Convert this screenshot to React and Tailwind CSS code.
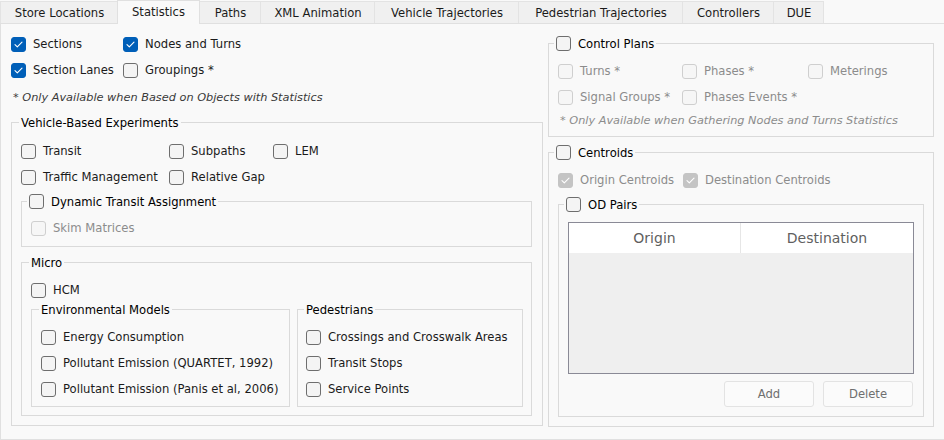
import React from 'react'

const tabs = [
  { label: 'Store Locations', w: 'w-[117px]' },
  { label: 'Statistics', w: 'w-[83px]', active: true },
  { label: 'Paths', w: 'w-[60px]' },
  { label: 'XML Animation', w: 'w-[114px]' },
  { label: 'Vehicle Trajectories', w: 'w-[144px]' },
  { label: 'Pedestrian Trajectories', w: 'w-[164px]' },
  { label: 'Controllers', w: 'w-[91px]' },
  { label: 'DUE', w: 'w-[51px]' },
]

function Box({ checked, disabled }) {
  const cls = checked
    ? disabled
      ? 'bg-[#c4c4c4] border-[#c4c4c4]'
      : 'bg-[#005fb8] border-[#005fb8]'
    : disabled
      ? 'bg-[#f6f6f6] border-[#cfcfcf]'
      : 'bg-[#f4f4f4] border-[#6e6e6e]'
  return (
    <span className={`w-[15px] h-[15px] shrink-0 rounded-[3px] border flex items-center justify-center ${cls}`}>
      {checked && (
        <svg width="9" height="7" viewBox="0 0 9 7" fill="none">
          <path d="M1 3.6L3.3 5.8L8 1.2" stroke="white" strokeWidth="1.1" strokeLinecap="round" strokeLinejoin="round" />
        </svg>
      )}
    </span>
  )
}

function Check({ label, checked, disabled, w = '', h = 'h-[26px]' }) {
  return (
    <label className={`flex items-center gap-[7px] ${h} ${w} ${disabled ? 'text-[#8c8c8c]' : 'text-[#1b1b1b]'}`}>
      <Box checked={checked} disabled={disabled} />
      <span className="whitespace-nowrap pt-[1px]">{label}</span>
    </label>
  )
}

function Group({ title, check, legendMl = 'ml-[7px]', className = '', children }) {
  return (
    <fieldset className={`border border-[#dadada] p-0 m-0 min-w-0 ${className}`}>
      <legend className={`${legendMl} px-[2px] h-[16px] leading-[16px] flex items-center`}>
        {check ? (
          <span className="flex items-center gap-[7px] text-[#000]">
            <Box />
            <span className="whitespace-nowrap pt-[1px]">{title}</span>
          </span>
        ) : (
          <span className="text-[#000] whitespace-nowrap pt-[1px]">{title}</span>
        )}
      </legend>
      {children}
    </fieldset>
  )
}

export default function App() {
  return (
    <div
      className="w-[944px] h-[440px] bg-[#f9f9f9] text-[11.6px] overflow-hidden"
      style={{ fontFamily: '"DejaVu Sans", sans-serif' }}
    >
      {/* Tabs */}
      <div className="h-[24px] flex items-end border-b border-[#e0e0e0] bg-[#f9f9f9]">
        {tabs.map((t, i) =>
          t.active ? (
            <div
              key={t.label}
              className={`${t.w} h-[24px] -mb-px flex items-center justify-center bg-[#f9f9f9] border-x border-t border-[#e0e0e0] text-[#1b1b1b]`}
            >
              {t.label}
            </div>
          ) : (
            <div
              key={t.label}
              className={`${t.w} h-[22px] flex items-center justify-center bg-[#f0f0f0] border-t border-[#e3e3e3] ${
                i === 2 ? '' : 'border-l'
              } ${i === tabs.length - 1 ? 'border-r' : ''} text-[#1b1b1b] pt-[2px] pl-[1px]`}
            >
              {t.label}
            </div>
          )
        )}
      </div>

      {/* Content */}
      <div className="h-[416px] flex border-l border-b border-[#e0e0e0]">
        {/* Left column */}
        <div className="w-[543px] pl-[10px] pt-[7px]">
          <div className="flex">
            <Check label="Sections" checked w="w-[112px]" />
            <Check label="Nodes and Turns" checked />
          </div>
          <div className="flex">
            <Check label="Section Lanes" checked w="w-[112px]" />
            <Check label="Groupings *" />
          </div>
          <div className="mt-[1px] h-[26px] flex items-center italic text-[11.3px] text-[#3a3a3a] pl-[2px] pt-[2px]">
            * Only Available when Based on Objects with Statistics
          </div>

          <Group title="Vehicle-Based Experiments" className="mt-[4px] w-[532px]">
            <div className="pl-[9px] pr-[10px] pt-[8px] pb-[9px]">
              <div className="flex">
                <Check label="Transit" w="w-[148px]" />
                <Check label="Subpaths" w="w-[104px]" />
                <Check label="LEM" />
              </div>
              <div className="flex">
                <Check label="Traffic Management" w="w-[148px]" />
                <Check label="Relative Gap" />
              </div>

              <Group title="Dynamic Transit Assignment" check legendMl="ml-[5px]" className="mt-[3px]">
                <div className="pl-[9px] pt-[6px] pb-[5px]">
                  <Check label="Skim Matrices" disabled />
                </div>
              </Group>

              <Group title="Micro" className="mt-[7px]">
                <div className="pl-[9px] pr-[8px] pt-[9px] pb-[8px]">
                  <Check label="HCM" h="h-[22px]" />
                  <div className="flex gap-[7px]">
                    <Group title="Environmental Models" className="w-[259px]">
                      <div className="pl-[9px] pt-[7px] pb-[4px]">
                        <Check label="Energy Consumption" />
                        <Check label="Pollutant Emission (QUARTET, 1992)" />
                        <Check label="Pollutant Emission (Panis et al, 2006)" />
                      </div>
                    </Group>
                    <Group title="Pedestrians" legendMl="ml-[6px]" className="w-[226px]">
                      <div className="pl-[8px] pt-[7px] pb-[4px]">
                        <Check label="Crossings and Crosswalk Areas" />
                        <Check label="Transit Stops" />
                        <Check label="Service Points" />
                      </div>
                    </Group>
                  </div>
                </div>
              </Group>
            </div>
          </Group>
        </div>

        {/* Right column */}
        <div className="w-[386px] ml-[4px] pt-[11px]">
          <Group title="Control Plans" check legendMl="ml-[5px]">
            <div className="pl-[9px] pt-[7px] pb-[6px]">
              <div className="flex">
                <Check label="Turns *" disabled w="w-[124px]" />
                <Check label="Phases *" disabled w="w-[126px]" />
                <Check label="Meterings" disabled />
              </div>
              <div className="flex">
                <Check label="Signal Groups *" disabled w="w-[124px]" />
                <Check label="Phases Events *" disabled />
              </div>
              <div className="h-[20px] flex items-center italic text-[11.3px] text-[#8c8c8c] pl-[2px] pt-[2px]">
                * Only Available when Gathering Nodes and Turns Statistics
              </div>
            </div>
          </Group>

          <Group title="Centroids" check legendMl="ml-[5px]" className="mt-[7px]">
            <div className="pt-[7px] pb-[9px]">
              <div className="flex pl-[9px]">
                <Check label="Origin Centroids" checked disabled w="w-[125px]" />
                <Check label="Destination Centroids" checked disabled />
              </div>
              <Group title="OD Pairs" check legendMl="ml-[5px]" className="mt-[3px] mx-[9px]">
                <div className="px-[9px] pt-[10px] pb-[9px]">
                  <div className="border border-[#8a8a96] bg-[#efefef]">
                    <div className="h-[30px] flex bg-white text-[14px] text-[#5f5f5f]">
                      <div className="w-[172px] flex items-center justify-center border-r border-[#e6e6e6] pt-[1px]">Origin</div>
                      <div className="flex-1 flex items-center justify-center pt-[1px]">Destination</div>
                    </div>
                    <div className="h-[120px]" />
                  </div>
                  <div className="mt-[7px] pr-[1px] flex justify-end gap-[9px]">
                    <button className="w-[90px] h-[26px] rounded-[3px] border border-[#e3e3e3] bg-[#fbfbfb] text-[#6f6f6f] pt-[1px]">
                      Add
                    </button>
                    <button className="w-[90px] h-[26px] rounded-[3px] border border-[#e3e3e3] bg-[#fbfbfb] text-[#6f6f6f] pt-[1px]">
                      Delete
                    </button>
                  </div>
                </div>
              </Group>
            </div>
          </Group>
        </div>
      </div>
    </div>
  )
}
